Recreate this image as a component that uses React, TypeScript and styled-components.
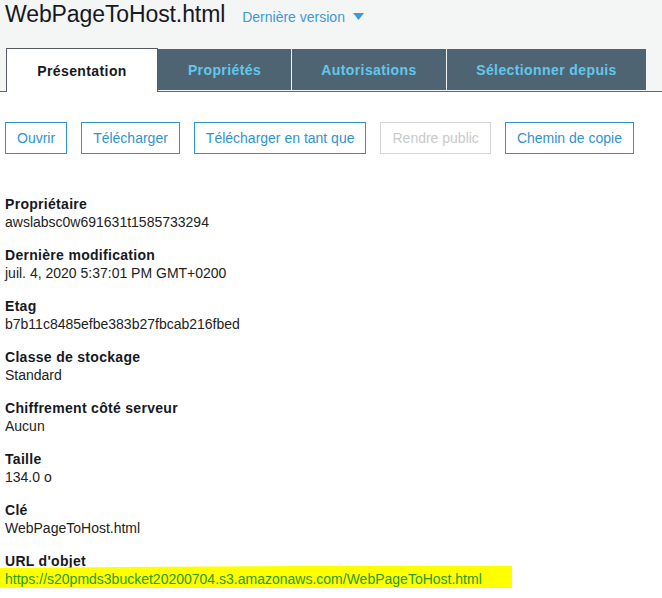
import React from 'react'
import styled, { createGlobalStyle } from 'styled-components'

const GlobalStyle = createGlobalStyle`
  html, body {
    margin: 0;
    padding: 0;
    background: #ffffff;
    font-family: "Liberation Sans", Arial, sans-serif;
    color: #16191f;
  }
`

const Header = styled.div`
  background: #f4f5f5;
  padding-left: 5px;
`

const TitleRow = styled.div`
  height: 28px;
  display: flex;
  align-items: center;
  gap: 17px;
`

const Title = styled.h1`
  margin: 0;
  font-size: 23px;
  font-weight: normal;
  color: #16191f;
  letter-spacing: -0.1px;
`

const Version = styled.span`
  display: flex;
  align-items: center;
  gap: 8px;
  font-size: 14px;
  color: #3d9ad8;
  margin-top: 5px;
`

const TabBar = styled.div`
  margin-top: 20px;
  margin-left: -5px;
  padding-left: 6px;
  height: 43px;
  display: flex;
  align-items: flex-end;
  gap: 1px;
  border-bottom: 1px solid #5d6a74;
`

const Tab = styled.div<{ $active?: boolean; $w: number }>`
  box-sizing: border-box;
  width: ${p => p.$w}px;
  display: flex;
  align-items: center;
  justify-content: center;
  font-size: 14px;
  font-weight: bold;
  letter-spacing: 0.4px;
  ${p => p.$active
    ? `
      height: 44px;
      margin-bottom: -1px;
      margin-right: -1px;
      background: #ffffff;
      color: #16191f;
      border: 1px solid #545b64;
      border-bottom: none;
    `
    : `
      height: 41px;
      margin-bottom: 1px;
      background: #4f6473;
      color: #60c8ec;
    `}
`

const Content = styled.div`
  padding: 30px 5px 0;
`

const Actions = styled.div`
  display: flex;
  gap: 14px;
`

const Button = styled.button<{ $disabled?: boolean }>`
  height: 32px;
  padding: 0 11px;
  background: #ffffff;
  font-family: "Liberation Sans", Arial, sans-serif;
  font-size: 14px;
  border: 1px solid ${p => (p.$disabled ? '#d5d5d5' : '#2f93d2')};
  color: ${p => (p.$disabled ? '#c9c9c9' : '#2f93d2')};
  cursor: ${p => (p.$disabled ? 'default' : 'pointer')};
`

const Fields = styled.dl`
  margin: 41px 0 0;
  display: flex;
  flex-direction: column;
  gap: 15px;
`

const Field = styled.div`
  display: flex;
  flex-direction: column;
`

const Label = styled.dt`
  font-size: 14px;
  font-weight: bold;
  line-height: 18px;
  letter-spacing: 0.3px;
  color: #16191f;
`

const Value = styled.dd`
  margin: 0;
  font-size: 14px;
  line-height: 18px;
  color: #222;
`

const UrlValue = styled.dd`
  position: relative;
  margin: 0 0 0 -5px;
  padding-left: 5px;
  font-size: 14px;
  line-height: 18px;
`

const Highlight = styled.svg`
  position: absolute;
  left: 0;
  top: -4px;
  width: 520px;
  height: 28px;
  pointer-events: none;
`

const Link = styled.a`
  position: relative;
  color: #2a9a22;
  text-decoration: none;
`

const fields = [
  { label: 'Propriétaire', value: 'awslabsc0w691631t1585733294' },
  { label: 'Dernière modification', value: 'juil. 4, 2020 5:37:01 PM GMT+0200' },
  { label: 'Etag', value: 'b7b11c8485efbe383b27fbcab216fbed' },
  { label: 'Classe de stockage', value: 'Standard' },
  { label: 'Chiffrement côté serveur', value: 'Aucun' },
  { label: 'Taille', value: '134.0 o' },
  { label: 'Clé', value: 'WebPageToHost.html' },
]

const tabs = [
  { name: 'Présentation', w: 152, active: true },
  { name: 'Propriétés', w: 133 },
  { name: 'Autorisations', w: 154 },
  { name: 'Sélectionner depuis', w: 199 },
]

const url = 'https://s20pmds3bucket20200704.s3.amazonaws.com/WebPageToHost.html'

const App: React.FC = () => {
  return (
    <>
      <GlobalStyle />
      <Header>
        <TitleRow>
          <Title>WebPageToHost.html</Title>
          <Version>
            Dernière version
            <svg width='11' height='7' viewBox='0 0 11 7'>
              <path d='M0 0 L11 0 L5.5 7 Z' fill='#3d9ad8' />
            </svg>
          </Version>
        </TitleRow>
        <TabBar>
          {tabs.map(t => (
            <Tab key={t.name} $w={t.w} $active={t.active}>{t.name}</Tab>
          ))}
        </TabBar>
      </Header>
      <Content>
        <Actions>
          <Button>Ouvrir</Button>
          <Button>Télécharger</Button>
          <Button>Télécharger en tant que</Button>
          <Button $disabled>Rendre public</Button>
          <Button>Chemin de copie</Button>
        </Actions>
        <Fields>
          {fields.map(f => (
            <Field key={f.label}>
              <Label>{f.label}</Label>
              <Value>{f.value}</Value>
            </Field>
          ))}
          <Field>
            <Label>URL d'objet</Label>
            <UrlValue>
              <Highlight viewBox='0 0 520 28'>
                <path
                  d='M0 2 L120 1 L300 0 L440 0 L500 -1 L512 0 L512 22 L450 23 L300 24 L150 26 L0 26 Z'
                  fill='#ffff00'
                />
              </Highlight>
              <Link href='#'>{url}</Link>
            </UrlValue>
          </Field>
        </Fields>
      </Content>
    </>
  )
}

export default App
